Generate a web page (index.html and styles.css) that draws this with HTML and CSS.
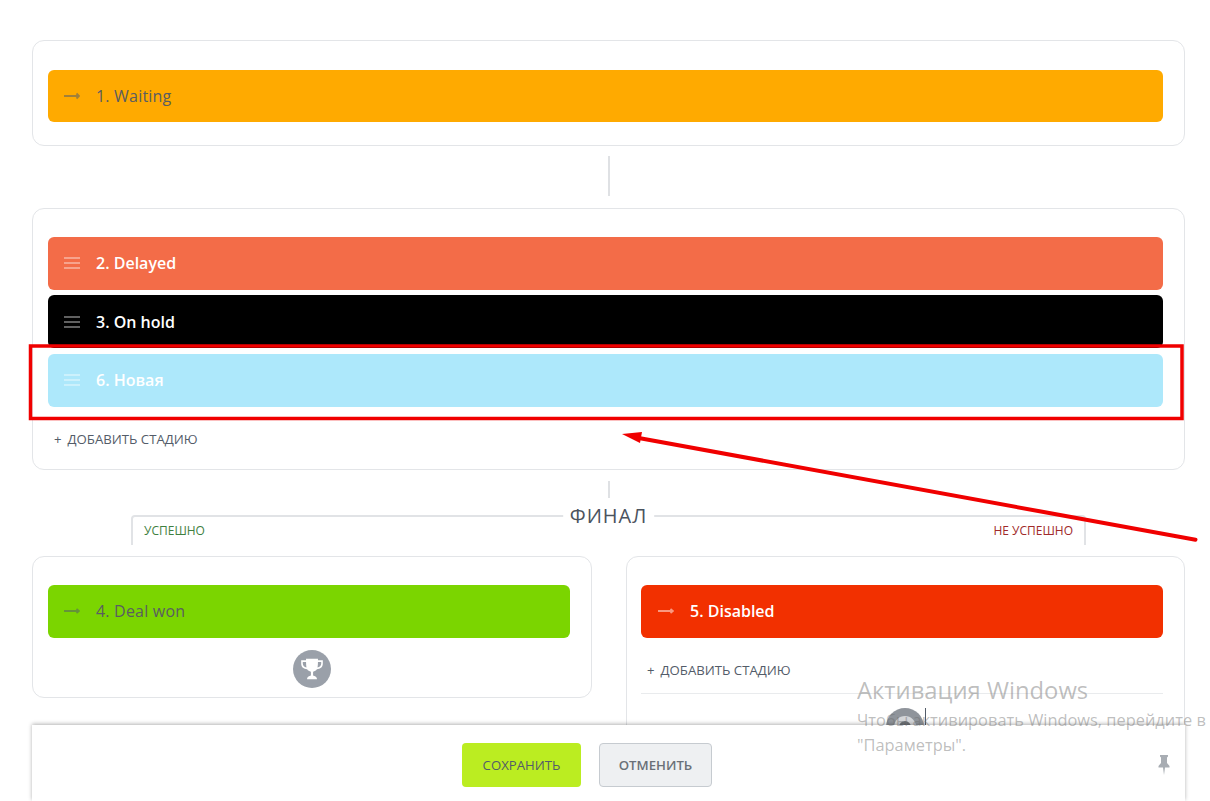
FILE: index.html
```html
<!DOCTYPE html>
<html lang="ru">
<head>
<meta charset="utf-8">
<title>Стадии</title>
<link rel="stylesheet" href="styles.css">
</head>
<body>
<main class="page">
  <section class="card card-first">
    <div class="stage stage-amber dark">
      <svg class="ico" viewBox="0 0 16 16"><path d="M0 8H15M12.500 5.500L15 8L12.500 10.500" /></svg>
      <span>1. Waiting</span>
    </div>
  </section>
  <div class="connector connector-long"></div>
  <section class="card card-middle">
    <div class="stage stage-coral light">
      <svg class="ico ico-lines" viewBox="0 0 16 16"><path d="M0 3H16M0 8H16M0 13H16" /></svg>
      <span>2. Delayed</span>
    </div>
    <div class="stage stage-black light">
      <svg class="ico ico-lines" viewBox="0 0 16 16"><path d="M0 3H16M0 8H16M0 13H16" /></svg>
      <span>3. On hold</span>
    </div>
    <div class="stage stage-sky light">
      <svg class="ico ico-lines" viewBox="0 0 16 16"><path d="M0 3H16M0 8H16M0 13H16" /></svg>
      <span>6. Новая</span>
    </div>
    <div class="add add-middle"><span class="plus">+</span>Добавить стадию</div>
  </section>
  <div class="connector connector-short"></div>
  <div class="final-head">
    <span class="label-ok">Успешно</span>
    <span class="label-fail">Не успешно</span>
    <span class="final-title">ФИНАЛ</span>
  </div>
  <div class="columns">
    <section class="card card-won">
      <div class="stage stage-green dark">
        <svg class="ico" viewBox="0 0 16 16"><path d="M0 8H15M12.500 6L15 8L12.500 10" /></svg>
        <span>4. Deal won</span>
      </div>
      <div class="round-icon round-won">
        <svg viewBox="0 0 24 24" class="trophy"><path d="M6.500 2.500H17.500V4H22V7C22 10.500 19.500 12 16.500 12.300C15.700 13.500 14.500 14.200 13 14.500V18C14.800 18.400 16 19 16.500 20.500V21.500H7.500V20.500C8 19 9.200 18.400 11 18V14.500C9.500 14.200 8.300 13.500 7.500 12.300C4.500 12 2 10.500 2 7V4H6.500ZM3.500 5.500V7C3.500 9 5 10.400 6.900 10.700C6.600 9 6.500 7 6.500 5.500ZM20.500 5.500H17.500C17.500 7 17.400 9 17.100 10.700C19 10.400 20.500 9 20.500 7Z" /></svg>
      </div>
    </section>
    <section class="card card-lost">
      <div class="stage stage-red light">
        <svg class="ico" viewBox="0 0 16 16"><path d="M0 8H15M12.500 6L15 8L12.500 10" /></svg>
        <span>5. Disabled</span>
      </div>
      <div class="add add-lost"><span class="plus">+</span>Добавить стадию</div>
      <div class="lost-rule"></div>
      <div class="lost-row">
        <div class="round-icon round-lost"><span class="round-inner"></span></div>
        <div class="caret"></div>
      </div>
    </section>
  </div>
</main>
<footer class="bar">
  <button class="btn btn-save" type="button">Сохранить</button>
  <button class="btn btn-cancel" type="button">Отменить</button>
  <svg class="pin" viewBox="0 0 12 20"><path d="M2 0H10V1.500L9 2.500V8L11.500 11V12.500H7L6 20L5 12.500H.5V11L3 8V2.500L2 1.500Z" /></svg>
</footer>
<svg class="annotation" viewBox="0 0 1210 801">
  <rect x="30.500" y="346" width="1151.500" height="72.500" />
  <path class="arrow-line" d="M1195.500 539.700L636 437.500" />
  <path class="arrow-head" d="M622 434L642 432L640 443Z" />
</svg>
<aside class="watermark">
  <div class="wm-title">Активация Windows</div>
  <div class="wm-text">Чтобы активировать Windows, перейдите в<br>"Параметры".</div>
</aside>
</body>
</html>
```
FILE: styles.css
```css
* { box-sizing: border-box; }
html, body { margin: 0; height: 801px; overflow: hidden; background: #fff; }
body { position: relative; font-family: "Open Sans", "Liberation Sans", sans-serif; color: #535c69; }
.page { padding: 40px 25px 0 32px; display: flex; flex-direction: column; }
.card { border: 1px solid #e3e5e8; border-radius: 12px; background: #fff; }
.card-first { height: 106px; padding: 29px 21px 0 15px; }
.card-middle { height: 262px; padding: 28px 21px 0 15px; }
.stage { height: 53px; border-radius: 6px; display: flex; align-items: center; padding: 0 0 2px 16px; font-size: 16px; line-height: 22px; font-weight: 600; margin-bottom: 5.4px; }
.card-first .stage { height: 52px; padding-bottom: 0; }
.stage .ico { width: 16px; height: 16px; margin-right: 16px; flex: none; fill: none; stroke-width: 1.8; }
.stage .ico-lines { stroke-width: 1.6; }
.dark { color: #5a5d61; font-weight: 500; letter-spacing: .2px; }
.dark .ico { stroke: rgba(83, 92, 105, .55); }
.light { color: #fff; }
.light .ico { stroke: rgba(255, 255, 255, .5); }
.stage-amber { background: #ffaa00; }
.stage-coral { background: #f36c48; }
.stage-black { background: #000; padding-bottom: 0; }
.stage-sky { background: #ade8fb; padding-bottom: 0; }
.stage-green { background: #7bd500; }
.stage-red { background: #f23000; padding-left: 17px; }
.add { font-size: 13.2px; line-height: 16px; text-transform: uppercase; color: #535c69; }
.plus { margin-right: 6px; }
.add-middle { margin: 24px 0 0 6px; }
.connector { width: 2px; background: #dfe1e4; align-self: center; }
.connector-long { height: 40px; margin-top: 10px; margin-bottom: 12px; }
.connector-short { height: 17px; margin-top: 11px; }
.final-head { position: relative; margin: 17px 99px 0; height: 30px; border: 2px solid #e1e3e6; border-bottom: 0; border-radius: 4px 4px 0 0; display: flex; justify-content: space-between; align-items: flex-start; padding: 6px 11px 0; font-size: 12px; line-height: 16px; text-transform: uppercase; }
.label-ok { color: #3f7f3f; font-weight: 500; }
.label-fail { color: #a02a2a; font-weight: 500; }
.final-title { position: absolute; left: 50%; top: -13px; transform: translateX(-50%); padding: 0 7px; background: #fff; font-size: 20px; line-height: 24px; letter-spacing: 1px; color: #4b535e; font-weight: 500; }
.columns { display: flex; align-items: flex-start; gap: 34px; margin-top: 11px; }
.card-won { width: 560px; height: 142px; padding: 28px 21px 0 15px; }
.card-lost { flex: 1; height: 245px; padding: 28px 21px 0 14px; }
.round-icon { width: 38px; height: 38px; border-radius: 50%; background: #9aa0a9; display: flex; align-items: center; justify-content: center; flex: none; }
.round-won { margin: 11.600px 0 0 245px; }
.trophy { width: 26px; height: 26px; fill: #fff; }
.add-lost { margin: 24px 0 0 6px; }
.lost-rule { height: 1px; background: #e9ebed; margin-top: 15px; }
.lost-row { display: flex; margin: 14px 0 0 245px; align-items: flex-start; }
.round-lost { margin: 0; background: #8f949b; }
.round-inner { width: 22px; height: 22px; border: 5px solid #d4d6d9; border-radius: 50%; background: #6d7278; }
.caret { width: 1px; height: 17px; background: #535c69; margin-left: 1px; }
.bar { position: absolute; left: 32px; top: 725px; width: 1153px; height: 76px; background: #fff; box-shadow: 0 -1px 4px rgba(0, 0, 0, .3); display: flex; align-items: center; gap: 18px; padding: 4px 15px 0 430px; }
.btn { height: 44px; border-radius: 4px; font-family: inherit; font-size: 13.2px; font-weight: 500; text-transform: uppercase; color: #535c69; padding: 0; }
.btn-save { width: 119px; background: #bbed21; border: 0; }
.btn-cancel { width: 113px; background: #eef0f2; border: 1px solid #c6cbd0; font-weight: 600; color: #6a7078; }
.pin { width: 12px; height: 20px; margin: 0 0 0 auto; fill: #a8adb3; }
.annotation { position: absolute; left: 0; top: 0; width: 1210px; height: 801px; pointer-events: none; }
.annotation rect { fill: none; stroke: #f00000; stroke-width: 3.5; }
.arrow-line { stroke: #f00000; stroke-width: 4; fill: none; stroke-linecap: round; }
.arrow-head { fill: #f00000; }
.watermark { position: absolute; left: 857px; top: 673px; width: 353px; overflow: hidden; color: rgba(110, 110, 110, .45); white-space: nowrap; }
.wm-title { font-size: 23.800px; line-height: 34px; }
.wm-text { font-size: 16.400px; line-height: 25px; }
```
